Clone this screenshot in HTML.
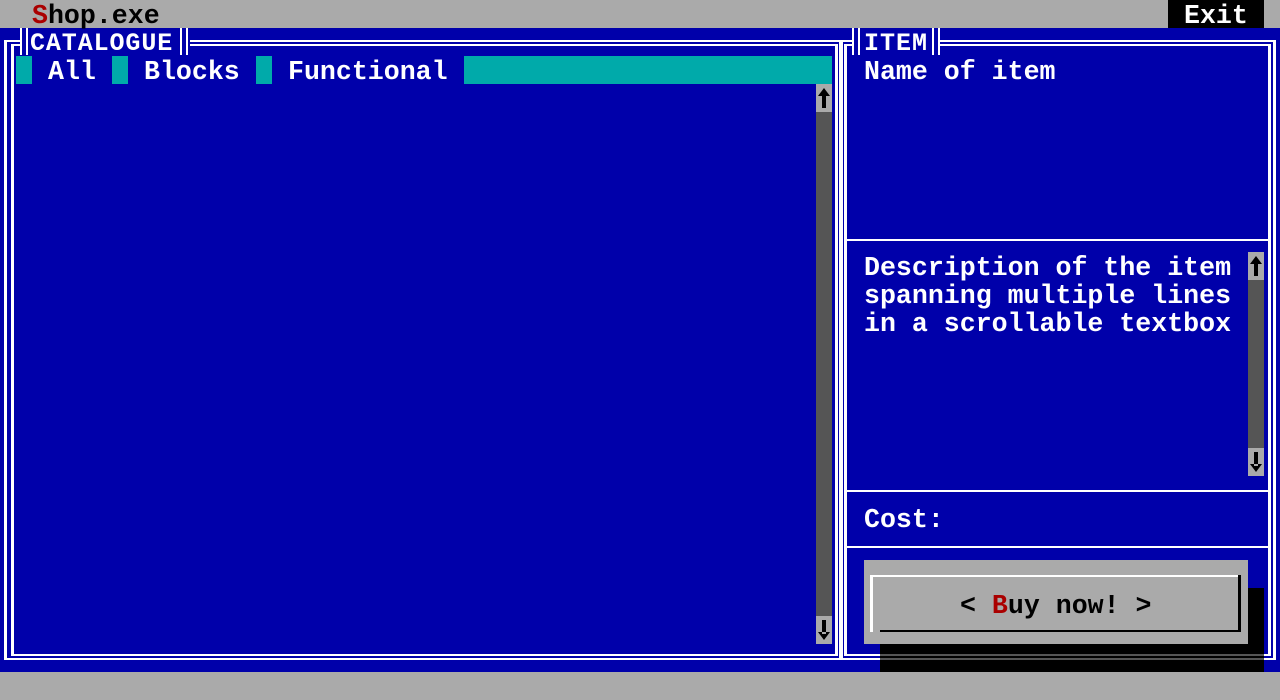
<!DOCTYPE html>
<html><head><meta charset="utf-8"><style>
*{margin:0;padding:0;box-sizing:border-box}
body{width:1280px;height:700px;overflow:hidden;background:#0000aa;position:relative;font-family:"Liberation Mono","DejaVu Sans Mono",monospace;font-weight:bold;font-size:26.6px;line-height:28px;color:#fff}
div,span,svg{position:absolute}
.t{white-space:pre;height:28px;padding-top:2px}
.w{background:#fff}
.g{background:#aaa}
.d{background:#555}
.k{background:#000}
.c{background:#00aaaa}
.b{background:#0000aa}
</style></head><body>
<div class="g" style="left:0;top:0;width:1280px;height:28px"></div>
<div class="t" style="left:32px;top:0;color:#000"><span style="position:static;color:#aa0000">S</span>hop.exe</div>
<div class="k" style="left:1168px;top:0;width:96px;height:28px"></div>
<div class="t" style="left:1184px;top:0">Exit</div>
<div class="g" style="left:0;top:672px;width:1280px;height:28px"></div>

<div style="left:4px;top:40px;width:838px;height:620px;border:solid #fff;border-width:2px 3px"></div>
<div style="left:11px;top:44px;width:827px;height:612px;border:solid #fff;border-width:2px 3px"></div>
<div style="left:840px;top:40px;width:436px;height:620px;border:solid #fff;border-width:2px 3px"></div>
<div style="left:844px;top:44px;width:427px;height:612px;border:solid #fff;border-width:2px 3px"></div>
<div class="w" style="left:846px;top:239px;width:422px;height:2px"></div>
<div class="w" style="left:846px;top:490px;width:422px;height:2px"></div>
<div class="w" style="left:846px;top:546px;width:422px;height:2px"></div>

<div class="b" style="left:20px;top:30px;width:170px;height:24px"></div>
<div class="w" style="left:20px;top:28px;width:2px;height:27px"></div>
<div class="w" style="left:26px;top:28px;width:2px;height:27px"></div>
<div class="w" style="left:180px;top:28px;width:2px;height:27px"></div>
<div class="w" style="left:186px;top:28px;width:2px;height:27px"></div>
<div class="t" style="left:30px;top:28px;font-size:25px;letter-spacing:0.9px">CATALOGUE</div>
<div class="b" style="left:852px;top:30px;width:88px;height:24px"></div>
<div class="w" style="left:852px;top:28px;width:2px;height:27px"></div>
<div class="w" style="left:858px;top:28px;width:2px;height:27px"></div>
<div class="w" style="left:932px;top:28px;width:2px;height:27px"></div>
<div class="w" style="left:938px;top:28px;width:2px;height:27px"></div>
<div class="t" style="left:864px;top:28px;font-size:25px;letter-spacing:1px">ITEM</div>

<div class="c" style="left:16px;top:56px;width:16px;height:28px"></div>
<div class="t" style="left:48px;top:56px">All</div>
<div class="c" style="left:112px;top:56px;width:16px;height:28px"></div>
<div class="t" style="left:144px;top:56px">Blocks</div>
<div class="c" style="left:256px;top:56px;width:16px;height:28px"></div>
<div class="t" style="left:288px;top:56px">Functional</div>
<div class="c" style="left:464px;top:56px;width:368px;height:28px"></div>

<div class="d" style="left:816px;top:84px;width:16px;height:560px"></div>
<div class="g" style="left:816px;top:84px;width:16px;height:28px"></div>
<svg style="left:816px;top:84px" width="16" height="28"><path d="M6 10h4v14h-4zM8 4l6 8h-12z" fill="#000"/></svg>
<div class="g" style="left:816px;top:616px;width:16px;height:28px"></div>
<svg style="left:816px;top:616px" width="16" height="28"><path d="M6 4h4v14h-4zM8 24l6-8h-12z" fill="#000"/></svg>

<div class="t" style="left:864px;top:56px">Name of item</div>
<div class="t" style="left:864px;top:252px">Description of the item</div>
<div class="t" style="left:864px;top:280px">spanning multiple lines</div>
<div class="t" style="left:864px;top:308px">in a scrollable textbox</div>
<div class="d" style="left:1248px;top:252px;width:16px;height:224px"></div>
<div class="g" style="left:1248px;top:252px;width:16px;height:28px"></div>
<svg style="left:1248px;top:252px" width="16" height="28"><path d="M6 10h4v14h-4zM8 4l6 8h-12z" fill="#000"/></svg>
<div class="g" style="left:1248px;top:448px;width:16px;height:28px"></div>
<svg style="left:1248px;top:448px" width="16" height="28"><path d="M6 4h4v14h-4zM8 24l6-8h-12z" fill="#000"/></svg>
<div class="t" style="left:864px;top:504px">Cost:</div>

<div class="k" style="left:880px;top:588px;width:384px;height:84px"></div>
<div class="d" style="left:880px;top:654px;width:384px;height:2px"></div>
<div class="d" style="left:880px;top:658px;width:384px;height:2px"></div>
<div class="g" style="left:864px;top:560px;width:384px;height:84px"></div>
<div class="w" style="left:870px;top:575px;width:370px;height:2px"></div>
<div class="w" style="left:870px;top:575px;width:3px;height:57px"></div>
<div class="k" style="left:1238px;top:575px;width:3px;height:57px"></div>
<div class="k" style="left:880px;top:630px;width:361px;height:2px"></div>
<div class="t" style="left:960px;top:590px;color:#000">&lt; <span style="position:static;color:#aa0000">B</span>uy now! &gt;</div>
</body></html>
